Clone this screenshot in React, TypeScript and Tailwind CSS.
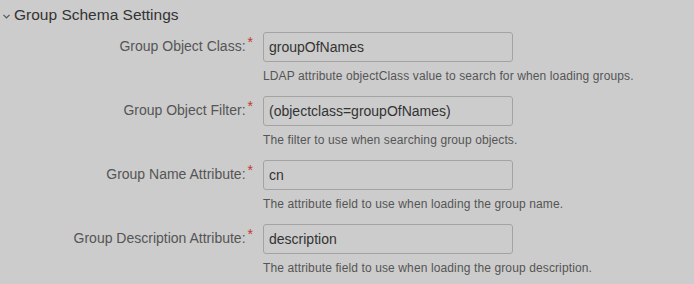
import React from "react";

const rows = [
  { label: "Group Object Class:", value: "groupOfNames", help: "LDAP attribute objectClass value to search for when loading groups." },
  { label: "Group Object Filter:", value: "(objectclass=groupOfNames)", help: "The filter to use when searching group objects." },
  { label: "Group Name Attribute:", value: "cn", help: "The attribute field to use when loading the group name." },
  { label: "Group Description Attribute:", value: "description", help: "The attribute field to use when loading the group description." },
];

export default function App() {
  return (
    <div
      className="w-[694px] h-[284px] bg-[#cccccc] overflow-hidden"
      style={{ fontFamily: '"Liberation Sans", Arial, sans-serif' }}
    >
      <div className="h-[30px] flex items-center pl-[3px]">
        <svg width="7" height="5" viewBox="0 0 7 5" className="mt-[2px]">
          <path d="M0.5 0.8 L3.5 3.8 L6.5 0.8" fill="none" stroke="#555" strokeWidth="1.2" />
        </svg>
        <span className="ml-[4px] text-[15.5px] leading-none text-[#333]">Group Schema Settings</span>
      </div>
      <div className="flex flex-col">
        {rows.map((r) => (
          <div key={r.label} className="flex h-[64px] pt-[2px]">
            <div className="w-[263px] shrink-0 flex justify-end items-start pr-[10px] pt-[6px]">
              <span className="text-[14px] leading-[17px] text-[#555]">{r.label}</span>
              <span className="text-[14px] leading-[10px] text-[#c0392b] ml-[2px] -mt-[1px]">*</span>
            </div>
            <div className="flex flex-col">
              <div className="w-[250px] h-[30px] border border-[#a3a3a3] rounded-[3px] flex items-center px-[5px] text-[14px] text-[#333]">
                {r.value}
              </div>
              <div className="mt-[6px] text-[12px] leading-[17px] tracking-[0.12px] text-[#555]">{r.help}</div>
            </div>
          </div>
        ))}
      </div>
    </div>
  );
}
